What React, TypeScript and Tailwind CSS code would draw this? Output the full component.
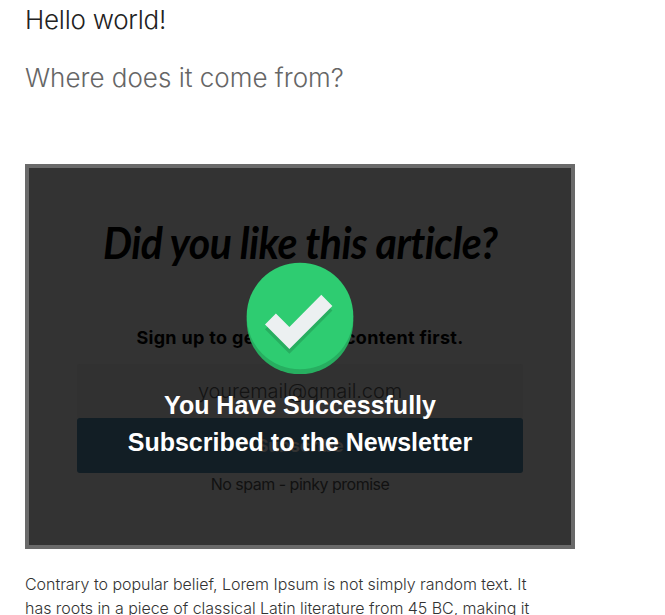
function SuccessIcon() {
  return (
    <svg className="block h-[112px] w-[108px]" viewBox="0 0 108 112" aria-hidden="true">
      <circle cx="54" cy="59" r="53.3" fill="#27ae60" />
      <circle cx="54" cy="54" r="53.3" fill="#2ecc71" />
      <path d="M19 67.2 L29.9 56.4 L43.4 69.9 L75.3 37.7 L86.4 48.6 L43.4 91.7 Z" fill="#27ae60" />
      <path d="M19 62.6 L29.9 51.6 L43.4 65.1 L75.3 32.8 L86.4 43.9 L43.4 86.9 Z" fill="#ecf0f1" />
    </svg>
  );
}

function SignupForm() {
  return (
    <div className="flex h-full flex-col items-center">
      <h3 className="mt-[44px] h-[68px] scale-x-[0.934] whitespace-nowrap font-[Lato,sans-serif] text-[44px] font-bold italic leading-[60px] tracking-[-0.6px] text-black">
        Did you like this article?
      </h3>
      <p className="mt-[45px] h-[26px] whitespace-nowrap font-[Inter,sans-serif] text-[18px] font-bold leading-[26px] tracking-[0.32px] text-black">
        Sign up to get the best content first.
      </p>
      <div className="mt-[13px] h-[54px] w-[446px] rounded-[3px] bg-[#313131] text-center font-[Inter,sans-serif] text-[20px] font-light leading-[54px] tracking-[-0.1px] text-[#131313]">
        youremail@gmail.com
      </div>
      <div className="h-[55px] w-[446px] rounded-[3px] bg-[#121e25] text-center font-[Inter,sans-serif] text-[18px] font-bold leading-[55px] tracking-[-0.3px] text-[#333]">
        Subscribe
      </div>
      <p className="mt-[-1px] whitespace-nowrap font-[Inter,sans-serif] text-[16px] font-normal leading-[24px] tracking-[-0.5px] text-[#111]">
        No spam - pinky promise
      </p>
    </div>
  );
}

export default function App() {
  return (
    <main className="h-[615px] w-full overflow-hidden bg-white pl-[25px] font-[Inter,sans-serif]">
      <h1 className="h-[49px] whitespace-nowrap pt-[1px] text-[26px] font-light leading-[38px] text-[#222]">
        <span className="tracking-[-0.25px]">Hello world!</span>
      </h1>
      <h2 className="h-[115px] whitespace-nowrap pt-[10px] text-[26px] font-light leading-[38px] text-[#666]">
        <span className="tracking-[0px]">Where does it come from?</span>
      </h2>
      <section className="relative h-[385px] w-[550px] border-4 border-[#6a6a6a] bg-[#333]">
        <SignupForm />
        <div className="absolute inset-0 flex flex-col items-center pt-[94px]">
          <SuccessIcon />
          <p className="mt-[13px] whitespace-nowrap text-center font-['Liberation_Sans',Arial,sans-serif] text-[25px] font-bold leading-[37px] text-white">
            You Have Successfully
            <br />
            Subscribed to the Newsletter
          </p>
        </div>
      </section>
      <div className="mt-[23px] whitespace-nowrap text-[16px] font-light leading-[24px] text-[#333]">
        <p className="tracking-[-0.04px]">Contrary to popular belief, Lorem Ipsum is not simply random text. It</p>
        <p className="tracking-[-0.04px]">has roots in a piece of classical Latin literature from 45 BC, making it</p>
      </div>
    </main>
  );
}
